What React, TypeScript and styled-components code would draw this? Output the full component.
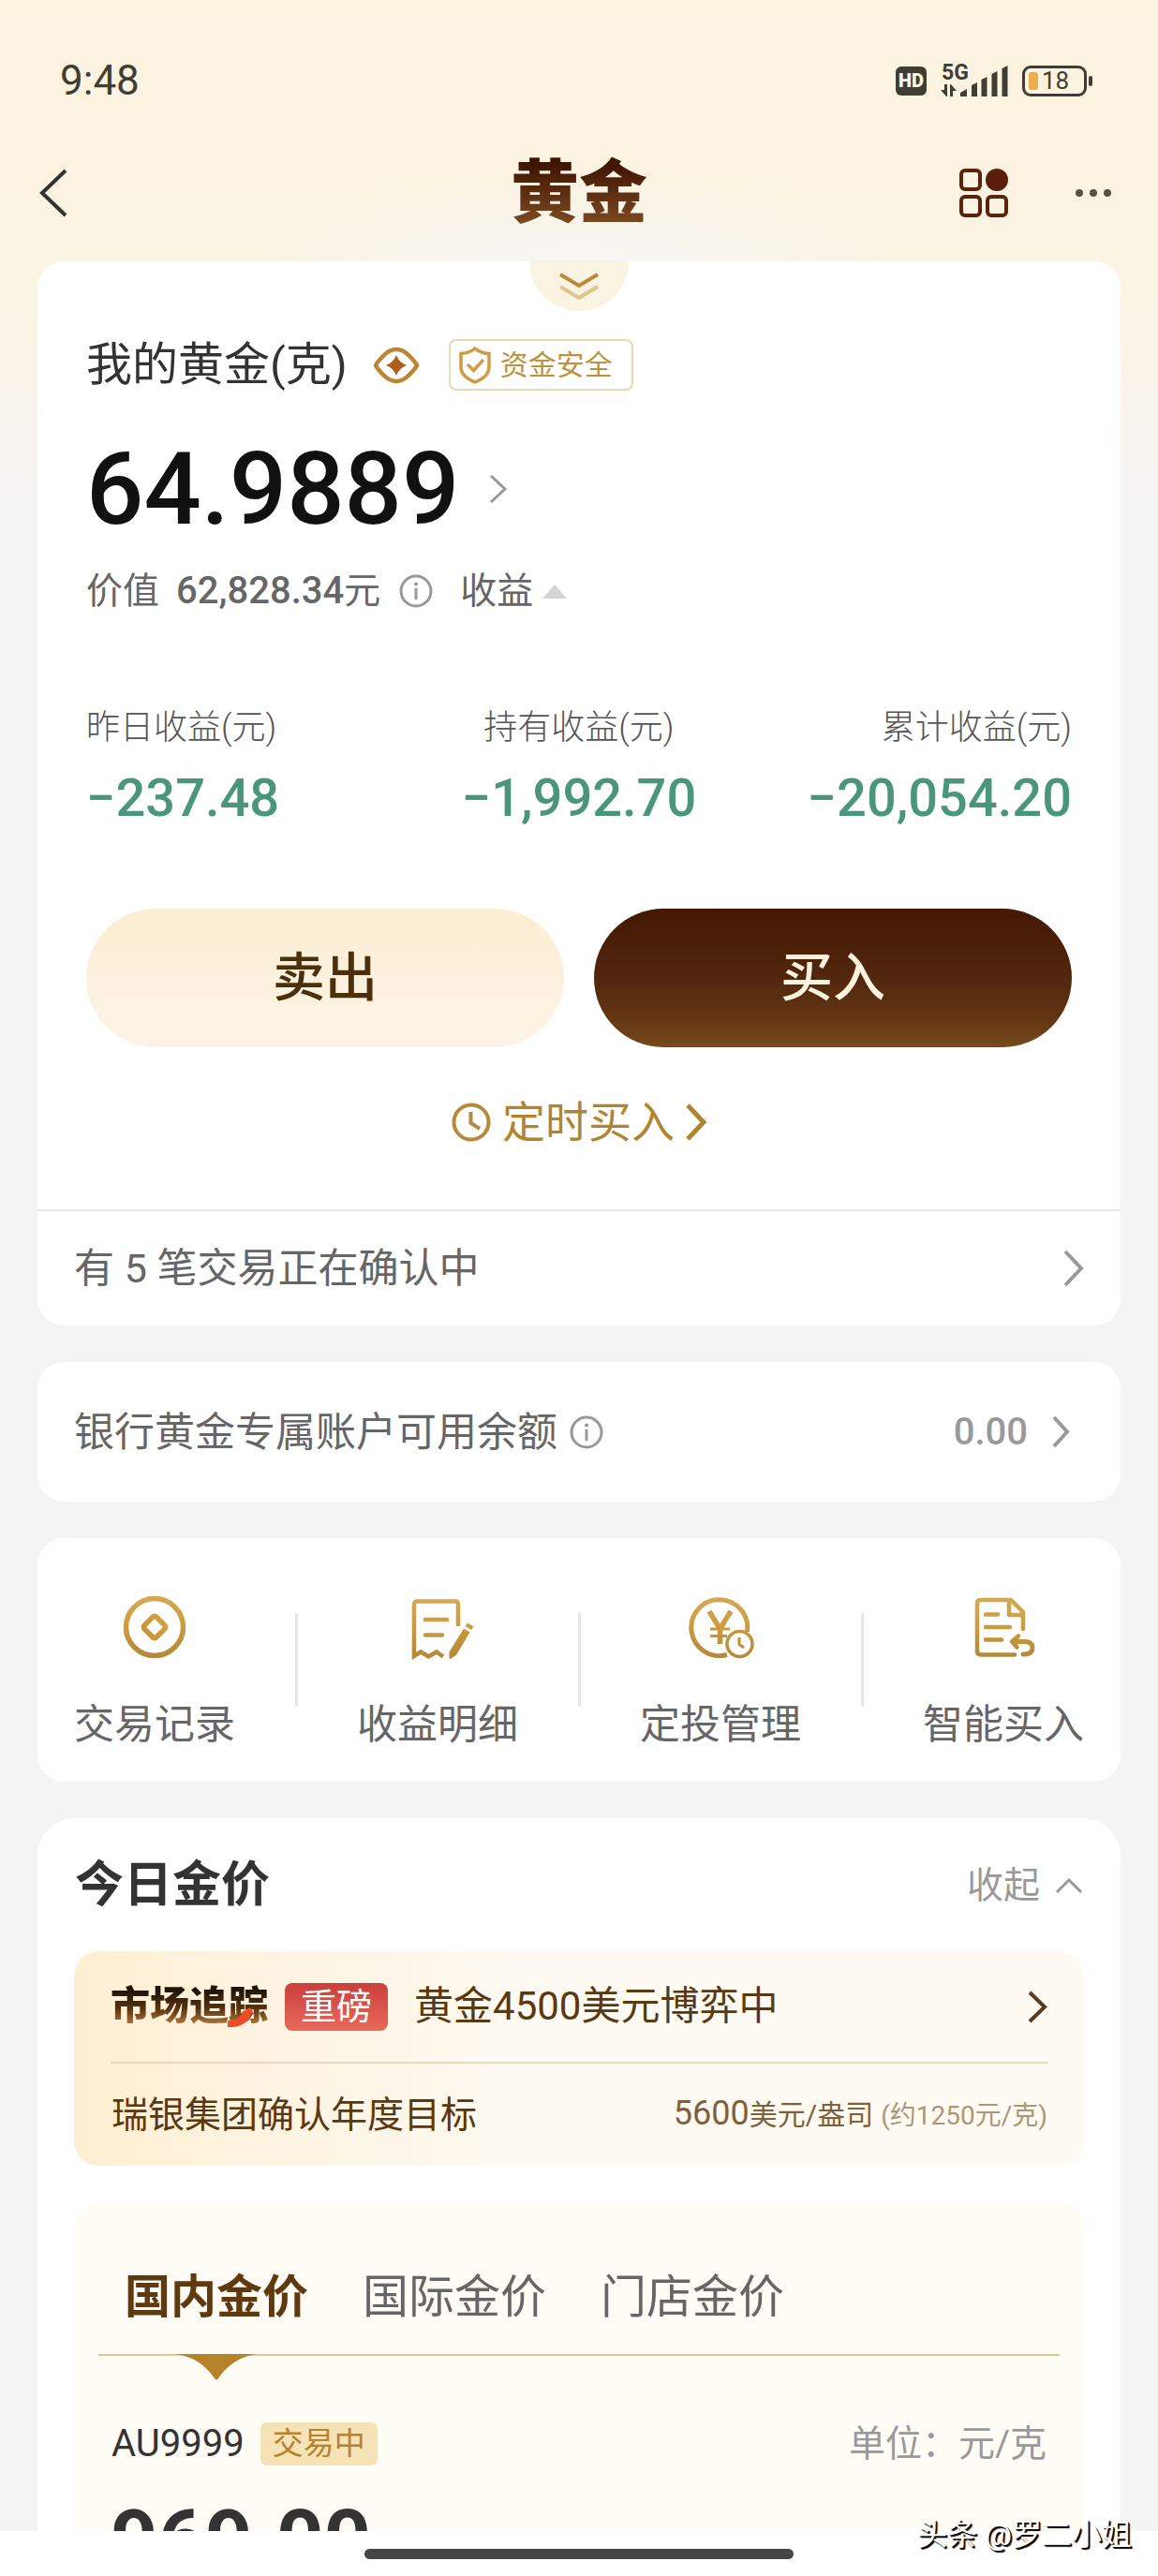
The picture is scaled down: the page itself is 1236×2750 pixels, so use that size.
import React from "react";
import styled, { createGlobalStyle, css } from "styled-components";

const family = `Roboto, "Noto Sans CJK SC", "Noto Sans", sans-serif`;

const GlobalStyle = createGlobalStyle`
  * { box-sizing: border-box; }
  body { margin: 0; background: #fff; font-family: ${family}; color: #333; }
  button { font: inherit; color: inherit; background: none; border: 0; padding: 0; cursor: pointer; }
  a { color: inherit; text-decoration: none; }
  h1, h2, p, dl, dd, dt { margin: 0; font-weight: inherit; }
  svg { display: block; flex: none; }
`;

const Screen = styled.div`
  position: relative;
  height: 100vh;
  display: flex;
  flex-direction: column;
  overflow: hidden;
`;

const Scroll = styled.div`
  flex: 1;
  min-height: 0;
  overflow: hidden;
  background:
    radial-gradient(ellipse 360px 110px at 50% 290px, #f7f6f2 20%, #f7f6f200 100%) no-repeat,
    linear-gradient(180deg, #fcf4df 0, #fbf3e1 220px, #fbf3e6 360px, #f4f4f4 540px, #f4f4f4 100%);
`;

const StatusBar = styled.div`
  height: 172px;
  padding: 0 70px 0 64px;
  display: flex;
  align-items: center;
  justify-content: space-between;
  color: #403d33;
`;

const Clock = styled.span`
  font-size: 44px;
  line-height: 48px;
`;

const StatusIcons = styled.div`
  display: flex;
  align-items: center;
  gap: 15px;
`;

const HdBadge = styled.span`
  width: 33px;
  height: 31px;
  border-radius: 6px;
  background: #403d33;
  color: #fcf4df;
  font-size: 20px;
  font-weight: 900;
  line-height: 31px;
  text-align: center;
`;

const Battery = styled.span`
  display: flex;
  align-items: center;
  gap: 2px;
`;

const BatteryBody = styled.span`
  width: 69px;
  height: 33px;
  border: 3px solid #403d33;
  border-radius: 9px;
  padding-left: 4px;
  display: flex;
  align-items: center;
  gap: 4px;
  font-size: 26px;
  line-height: 27px;
`;

const BatteryLevel = styled.span`
  width: 10px;
  height: 19px;
  border-radius: 3px;
  background: #ecae4d;
`;

const BatteryTip = styled.span`
  width: 4px;
  height: 11px;
  border-radius: 2px;
  background: #403d33;
`;

const Header = styled.header`
  height: 68px;
  padding: 0 42px;
  display: grid;
  grid-template-columns: 1fr auto 1fr;
  grid-template-rows: 68px;
  align-items: center;
`;

const Title = styled.h1`
  font-size: 73px;
  font-weight: 900;
  line-height: 88px;
  color: transparent;
  background: linear-gradient(180deg, #3f1503 15%, #7d4c22 90%);
  background-clip: text;
  -webkit-background-clip: text;
`;

const HeaderActions = styled.div`
  display: flex;
  align-items: center;
  justify-content: flex-end;
  gap: 72px;
  padding-right: 8px;
`;

const Main = styled.main`
  padding: 39px 40px 0;
  display: flex;
  flex-direction: column;
  gap: 39px;
`;

const Card = styled.section`
  background: #fff;
  border-radius: 28px;
`;

const Pull = styled.button`
  display: flex;
  justify-content: center;
  align-items: center;
  width: 106px;
  height: 53px;
  margin: 0 auto;
  border-radius: 0 0 53px 53px;
  background: #fbf3e2;
`;

const Holdings = styled.div`
  padding: 0 52px 63px;
  display: flex;
  flex-direction: column;
`;

const Row = styled.div`
  display: flex;
  align-items: center;
`;

const HoldTitle = styled(Row)`
  margin-top: 30px;
  height: 55px;
  font-size: 49px;
  line-height: 55px;
`;

const EyeButton = styled.button`
  margin: 0 31px 0 27px;
`;

const SafeTag = styled.a`
  display: flex;
  align-items: center;
  gap: 10px;
  height: 55px;
  padding: 0 20px 0 9px;
  border: 2px solid #e9d9ae;
  border-radius: 8px;
  font-size: 30px;
  line-height: 40px;
  color: #c0913a;
`;

const Grams = styled.a`
  display: flex;
  align-items: center;
  gap: 32px;
  margin-top: 51px;
  font-size: 108px;
  font-weight: 500;
  line-height: 108px;
  color: #111;
`;

const ValueRow = styled(Row)`
  margin-top: 31px;
  font-size: 39px;
  line-height: 48px;
  color: #666;
`;

const Amount = styled.span`
  margin-left: 18px;
  font-size: 40px;
  font-weight: 500;
`;

const InfoMark = styled.button<{ $gap: number }>`
  margin-left: ${(p) => p.$gap}px;
`;

const Toggle = styled.button`
  display: flex;
  align-items: center;
  gap: 10px;
  margin-left: 29px;
`;

const Stats = styled.dl`
  margin-top: 98px;
  display: grid;
  grid-template-columns: 1fr 1fr 1fr;
`;

const Stat = styled.div<{ $align: string }>`
  text-align: ${(p) => p.$align};
  dt { font-size: 36px; font-weight: 300; line-height: 48px; color: #555; }
  dd { margin-top: 19px; font-size: 56px; font-weight: 500; line-height: 64px; color: #4a967b; white-space: nowrap; }
`;

const Trades = styled.div`
  margin-top: 86px;
  display: grid;
  grid-template-columns: 1fr 1fr;
  gap: 32px;
`;

const TradeButton = styled.button<{ $primary?: boolean }>`
  height: 148px;
  border-radius: 74px;
  font-size: 56px;
  font-weight: 500;
  line-height: 80px;
  ${(p) =>
    p.$primary
      ? css`
          background: linear-gradient(180deg, #441803 0%, #51270d 50%, #633613 80%, #784a1e 100%);
          color: #fcf1dc;
        `
      : css`
          background: linear-gradient(180deg, #fbeed2 0%, #fcf3e6 100%);
          color: #4c2f0b;
        `}
`;

const Schedule = styled.a`
  margin: 50px auto 0;
  display: flex;
  align-items: center;
  gap: 12px;
  font-size: 46px;
  line-height: 60px;
  color: #b1842f;
`;

const LineRow = styled.a<{ $tall?: boolean }>`
  display: flex;
  align-items: center;
  height: ${(p) => (p.$tall ? 149 : 124)}px;
  padding: 0 ${(p) => (p.$tall ? 54 : 39)}px 0 39px;
  border-top: ${(p) => (p.$tall ? 0 : 2)}px solid #e8e8e8;
  font-size: 43px;
  line-height: 60px;
  color: #666;
`;

const Push = styled.span`
  margin-left: auto;
  display: flex;
  align-items: center;
  gap: 26px;
  font-size: 40px;
  font-weight: 500;
  line-height: 48px;
  color: #999;
`;

const Services = styled.nav`
  height: 260px;
  padding: 0 39px;
  background: #fff;
  border-radius: 28px;
  display: flex;
  justify-content: space-between;
`;

const Service = styled.a`
  padding-top: 59px;
  display: flex;
  flex-direction: column;
  align-items: center;
  gap: 38px;
  font-size: 43px;
  line-height: 60px;
  color: #666;
`;

const ServiceDivider = styled.span`
  width: 3px;
  height: 99px;
  margin-top: 80px;
  background: #e6e6e6;
`;

const PriceCard = styled(Card)`
  border-radius: 40px;
  padding: 42px 39px 0;
`;

const PriceHead = styled(Row)`
  justify-content: space-between;
  height: 60px;
  padding: 0 1px;
  h2 { font-size: 52px; font-weight: 700; line-height: 60px; }
`;

const Collapse = styled.button`
  display: flex;
  align-items: center;
  gap: 16px;
  font-size: 39px;
  line-height: 48px;
  color: #999;
`;

const Banner = styled.section`
  margin-top: 40px;
  padding: 0 39px;
  border-radius: 26px;
  background: linear-gradient(90deg, #fdefd2 0%, #fdf6e8 30%, #fffbf3 45%, #fffbf3 100%);
`;

const BannerTop = styled.a`
  display: flex;
  align-items: center;
  height: 120px;
  border-bottom: 2px solid #e6d9c0;
  font-size: 42px;
  line-height: 60px;
  color: #5a3810;
  svg:last-child { margin-left: auto; }
`;

const Brand = styled.span`
  position: relative;
  margin-right: 18px;
`;

const BrandText = styled.span`
  font-weight: 900;
  line-height: 56px;
  display: block;
  color: transparent;
  background: linear-gradient(180deg, #21150a 20%, #5a3310 55%, #b27b3c 85%);
  background-clip: text;
  -webkit-background-clip: text;
`;

const Swoosh = styled.svg`
  position: absolute;
  right: 14px;
  bottom: 5px;
`;

const HotTag = styled.span`
  height: 51px;
  padding: 0 17px;
  margin-right: 28px;
  border-radius: 8px;
  background: linear-gradient(180deg, #ca3f3b, #e86a5b);
  color: #fff;
  font-size: 38px;
  line-height: 51px;
`;

const BannerBottom = styled.div`
  display: flex;
  align-items: center;
  justify-content: space-between;
  height: 109px;
  padding-left: 1px;
  font-size: 39px;
  line-height: 48px;
  color: #5a3810;
`;

const Target = styled.span`
  display: flex;
  align-items: baseline;
  font-size: 30px;
  color: #7e603a;
  b { font-size: 36px; font-weight: 400; }
  small { margin-left: 8px; font-size: 28px; color: #ab967a; }
`;

const Quotes = styled.section`
  margin-top: 39px;
  padding: 64px 26px 0;
  border-radius: 26px;
  background: #fffcf6;
`;

const Tabs = styled.div`
  display: flex;
  gap: 58px;
  padding: 0 28px;
  border-bottom: 2px solid #dccb98;
`;

const Tab = styled.button<{ $active?: boolean }>`
  position: relative;
  height: 98px;
  padding-bottom: 22px;
  font-size: 49px;
  line-height: 72px;
  font-weight: ${(p) => (p.$active ? 700 : 400)};
  color: ${(p) => (p.$active ? "#5f3a10" : "#666")};
`;

const Pointer = styled.svg`
  position: absolute;
  left: 50%;
  top: 98px;
  margin-left: -43px;
`;

const QuoteRow = styled(Row)`
  margin-top: 66px;
  padding: 0 14px;
  height: 56px;
`;

const Symbol = styled.span`
  font-size: 40px;
  line-height: 48px;
`;

const Trading = styled.span`
  height: 46px;
  margin-left: 17px;
  padding: 0 13px;
  border-radius: 7px;
  background: #f5e2b6;
  color: #b6832c;
  font-size: 33px;
  line-height: 46px;
`;

const Unit = styled.span`
  margin-left: auto;
  font-size: 39px;
  line-height: 52px;
  color: #999;
`;

const Price = styled.p`
  padding: 0 13px;
  margin-top: 24px;
  font-size: 88px;
  font-weight: 700;
  line-height: 100px;
`;

const HomeArea = styled.footer`
  flex: none;
  height: 48px;
  padding-top: 19px;
  background: #fff;
`;

const HomeBar = styled.div`
  width: 37%;
  height: 11px;
  margin: 0 auto;
  border-radius: 6px;
  background: #464646;
`;

const Watermark = styled.span`
  position: absolute;
  right: 28px;
  bottom: 20px;
  font-size: 32px;
  line-height: 48px;
  color: #fff;
  text-shadow: 2px 2px 1px #000, 1px 1px 0 #000;
`;

type ChevronProps = { w: number; h: number; color: string; stroke?: number };

const Chevron = ({ w, h, color, stroke = 4 }: ChevronProps) => (
  <svg width={w} height={h} viewBox={`0 0 ${w} ${h}`} fill="none" stroke={color} strokeWidth={stroke} aria-hidden>
    <path d={`M2 2 L${w - 3} ${h / 2} L2 ${h - 2}`} />
  </svg>
);

const Info = () => (
  <svg width="36" height="36" viewBox="0 0 36 36" fill="none" stroke="#999" strokeWidth="3" aria-hidden>
    <circle cx="18" cy="18" r="16" />
    <path d="M18 15v12" />
    <circle cx="18" cy="10.5" r="2" fill="#999" stroke="none" />
  </svg>
);

const Signal = () => (
  <svg width="72" height="48" viewBox="0 -6 72 48" fill="#403d33" aria-hidden>
    <text x="1" y="17" fontFamily="Roboto, sans-serif" fontWeight="700" fontSize="23">5G</text>
    <path d="M4 22h3v13H6L0 28h4zM10 22h1l6 7h-4v6h-3z" />
    <path d="M21 35v-4l7-4v8zM33 35V23l6-3v15zM43.500 35V17l6-3v21zM54.500 35V11l6-3v27zM65.500 35V5l6-3v33z" />
  </svg>
);

const Gold = ({ id }: { id: string }) => (
  <defs>
    <linearGradient id={id} x1="0" y1="0" x2="0" y2="72" gradientUnits="userSpaceOnUse">
      <stop offset="0" stopColor="#d6ab58" />
      <stop offset="0.5" stopColor="#cc9b3c" />
      <stop offset="1" stopColor="#b3853a" />
    </linearGradient>
  </defs>
);

const CoinIcon = () => (
  <svg width="72" height="72" viewBox="0 0 72 72" fill="none" stroke="url(#g1)" aria-hidden>
    <Gold id="g1" />
    <circle cx="36" cy="36" r="30.500" strokeWidth="5.500" />
    <rect x="27" y="27" width="18" height="18" rx="2.500" strokeWidth="5.500" transform="rotate(45 36 36)" />
  </svg>
);

const ReceiptIcon = () => (
  <svg width="72" height="72" viewBox="0 0 72 72" overflow="visible" fill="none" stroke="url(#g2)" strokeWidth="4.500" aria-hidden>
    <Gold id="g2" />
    <path d="M58 35V12Q58 8.500 54.500 8.500H14.500Q11 8.500 11 12V67L18 62.500L26.500 67.500L35 62.500L42 67.500" />
    <path d="M23 28H46M23 44.500H41" strokeLinecap="round" />
    <path d="M64 37.500L70.500 41.500L56 66L48.500 70.500V62.500z" fill="url(#g2)" stroke="none" />
    <path d="M65.500 35L68 31.500L74.500 35.500L72 39z" fill="url(#g2)" stroke="none" />
  </svg>
);

const YenIcon = () => (
  <svg width="72" height="72" viewBox="0 0 72 72" fill="none" stroke="url(#g3)" aria-hidden>
    <Gold id="g3" />
    <path d="M43 65.500A30 30 0 1 1 64.500 41" strokeWidth="5" />
    <path d="M24 19L35.500 38L47 19M35.500 37V54" strokeWidth="5.500" />
    <path d="M25 38H46M25 45.500H43" strokeWidth="3" />
    <circle cx="56.500" cy="54" r="13.500" strokeWidth="3.500" fill="#fff" />
    <path d="M56 47V54.500L61 58" strokeWidth="3" />
  </svg>
);

const SmartIcon = () => (
  <svg width="72" height="72" viewBox="0 0 72 72" fill="none" stroke="url(#g4)" strokeWidth="4.500" strokeLinecap="round" strokeLinejoin="round" aria-hidden>
    <Gold id="g4" />
    <path d="M48 65.500H12Q8 65.500 8 61.500V11Q8 7 12 7H44L57 20V38" />
    <path d="M42 8V23H56" />
    <path d="M17 22.500H30M17 36H43M17 49.500H34" />
    <path d="M47 51.500H58.500Q67 51.500 67 58T59 65H57" strokeWidth="5" />
    <path d="M52 45.500L45 51.500L50.500 57.500" fill="url(#g4)" />
  </svg>
);

const services = [
  { label: "交易记录", Icon: CoinIcon },
  { label: "收益明细", Icon: ReceiptIcon },
  { label: "定投管理", Icon: YenIcon },
  { label: "智能买入", Icon: SmartIcon },
];

const stats = [
  { label: "昨日收益(元)", value: "−237.48", align: "left" },
  { label: "持有收益(元)", value: "−1,992.70", align: "center" },
  { label: "累计收益(元)", value: "−20,054.20", align: "right" },
];

const tabs = ["国内金价", "国际金价", "门店金价"];

export default function App() {
  return (
    <Screen>
      <GlobalStyle />
      <Scroll>
        <StatusBar>
          <Clock>9:48</Clock>
          <StatusIcons>
            <HdBadge>HD</HdBadge>
            <Signal />
            <Battery>
              <BatteryBody>
                <BatteryLevel />
                18
              </BatteryBody>
              <BatteryTip />
            </Battery>
          </StatusIcons>
        </StatusBar>

        <Header>
          <button aria-label="返回">
            <svg width="30" height="52" viewBox="0 0 30 52" fill="none" stroke="#333" strokeWidth="4" aria-hidden>
              <path d="M28 2L3 26L28 50" />
            </svg>
          </button>
          <Title>黄金</Title>
          <HeaderActions>
            <button aria-label="应用">
              <svg width="52" height="52" viewBox="0 0 52 52" fill="none" stroke="#5a2310" strokeWidth="4" aria-hidden>
                <rect x="2" y="2" width="20" height="20" rx="4" />
                <circle cx="40" cy="12" r="12" fill="#5a1f0c" stroke="none" />
                <rect x="2" y="30" width="20" height="20" rx="4" />
                <rect x="30" y="30" width="20" height="20" rx="4" />
              </svg>
            </button>
            <button aria-label="更多">
              <svg width="38" height="8" viewBox="0 0 38 8" fill="#5c5046" aria-hidden>
                <circle cx="4" cy="4" r="4" />
                <circle cx="19" cy="4" r="4" />
                <circle cx="34" cy="4" r="4" />
              </svg>
            </button>
          </HeaderActions>
        </Header>

        <Main>
          <Card>
            <Pull aria-label="展开">
              <svg width="42" height="30" viewBox="0 0 42 30" fill="none" strokeWidth="4" aria-hidden>
                <path d="M1 2L21 14L41 2" stroke="#b98c3a" />
                <path d="M1 15L21 27L41 15" stroke="#dcc48c" />
              </svg>
            </Pull>
            <Holdings>
              <HoldTitle>
                我的黄金(克)
                <EyeButton aria-label="隐藏金额">
                  <svg width="50" height="40" viewBox="0 0 50 40" fill="none" aria-hidden>
                    <path d="M3 20Q4 17 12 9Q18 3 25 3T38 9Q46 17 47 20Q46 23 38 31Q32 37 25 37T12 31Q4 23 3 20z" stroke="#bd8432" strokeWidth="4.500" />
                    <path d="M25 9Q28 17 36 20Q28 23 25 31Q22 23 14 20Q22 17 25 9z" fill="#ad5f1e" />
                  </svg>
                </EyeButton>
                <SafeTag href="#safe">
                  <svg width="34" height="40" viewBox="0 0 34 40" fill="none" stroke="#cf9c45" strokeWidth="3.500" aria-hidden>
                    <path d="M17 2Q23 7 32 7.500V22Q32 32 17 38Q2 32 2 22V7.500Q11 7 17 2z" />
                    <path d="M9 19L15.500 25.500L26 14" />
                  </svg>
                  资金安全
                </SafeTag>
              </HoldTitle>
              <Grams href="#detail">
                64.9889
                <Chevron w={20} h={32} color="#999" stroke={3} />
              </Grams>
              <ValueRow>
                价值
                <Amount>62,828.34</Amount>元
                <InfoMark $gap={20} aria-label="价值说明">
                  <Info />
                </InfoMark>
                <Toggle>
                  收益
                  <svg width="26" height="15" viewBox="0 0 26 15" fill="#d4d4d4" aria-hidden>
                    <path d="M13 0L26 15H0z" />
                  </svg>
                </Toggle>
              </ValueRow>
              <Stats>
                {stats.map((s) => (
                  <Stat key={s.label} $align={s.align}>
                    <dt>{s.label}</dt>
                    <dd>{s.value}</dd>
                  </Stat>
                ))}
              </Stats>
              <Trades>
                <TradeButton>卖出</TradeButton>
                <TradeButton $primary>买入</TradeButton>
              </Trades>
              <Schedule href="#schedule">
                <svg width="42" height="42" viewBox="0 0 42 42" fill="none" stroke="#b58a3c" strokeWidth="4" aria-hidden>
                  <circle cx="21" cy="21" r="18.500" />
                  <path d="M20.500 10V22L30 28" />
                </svg>
                定时买入
                <Chevron w={22} h={40} color="#b1842f" stroke={5} />
              </Schedule>
            </Holdings>
            <LineRow href="#pending">
              有 5 笔交易正在确认中
              <Push>
                <Chevron w={22} h={40} color="#999" />
              </Push>
            </LineRow>
          </Card>

          <Card>
            <LineRow $tall href="#balance">
              银行黄金专属账户可用余额
              <InfoMark as="span" $gap={13}>
                <Info />
              </InfoMark>
              <Push>
                0.00
                <Chevron w={19} h={35} color="#999" />
              </Push>
            </LineRow>
          </Card>

          <Services>
            {services.map(({ label, Icon }, i) => (
              <React.Fragment key={label}>
                {i > 0 && <ServiceDivider />}
                <Service href="#service">
                  <Icon />
                  {label}
                </Service>
              </React.Fragment>
            ))}
          </Services>

          <PriceCard>
            <PriceHead>
              <h2>今日金价</h2>
              <Collapse>
                收起
                <svg width="30" height="18" viewBox="0 0 30 18" fill="none" stroke="#999" strokeWidth="3" aria-hidden>
                  <path d="M2 16L15 3L28 16" />
                </svg>
              </Collapse>
            </PriceHead>

            <Banner>
              <BannerTop href="#market">
                <Brand>
                  <BrandText>市场追踪</BrandText>
                  <Swoosh width="30" height="22" viewBox="0 0 30 22" fill="#ef4a2a">
                    <path d="M1 14Q14 14 17 5L14 6L25 0L30 8L26 6Q22 22 1 21z" />
                  </Swoosh>
                </Brand>
                <HotTag>重磅</HotTag>
                黄金4500美元博弈中
                <Chevron w={21} h={35} color="#5a3a20" />
              </BannerTop>
              <BannerBottom>
                瑞银集团确认年度目标
                <Target>
                  <b>5600</b>美元/盎司<small>(约1250元/克)</small>
                </Target>
              </BannerBottom>
            </Banner>

            <Quotes>
              <Tabs role="tablist">
                {tabs.map((t, i) => (
                  <Tab key={t} role="tab" aria-selected={i === 0} $active={i === 0}>
                    {t}
                    {i === 0 && (
                      <Pointer width="86" height="28" viewBox="0 0 86 28" fill="#b6832c">
                        <path d="M0 0H86Q60 4 45 26Q43 29 41 26Q26 4 0 0z" />
                      </Pointer>
                    )}
                  </Tab>
                ))}
              </Tabs>
              <QuoteRow>
                <Symbol>AU9999</Symbol>
                <Trading>交易中</Trading>
                <Unit>单位：元/克</Unit>
              </QuoteRow>
              <Price>969.00</Price>
            </Quotes>
          </PriceCard>
        </Main>
      </Scroll>
      <HomeArea>
        <HomeBar />
      </HomeArea>
      <Watermark>头条 @罗二小姐</Watermark>
    </Screen>
  );
}
